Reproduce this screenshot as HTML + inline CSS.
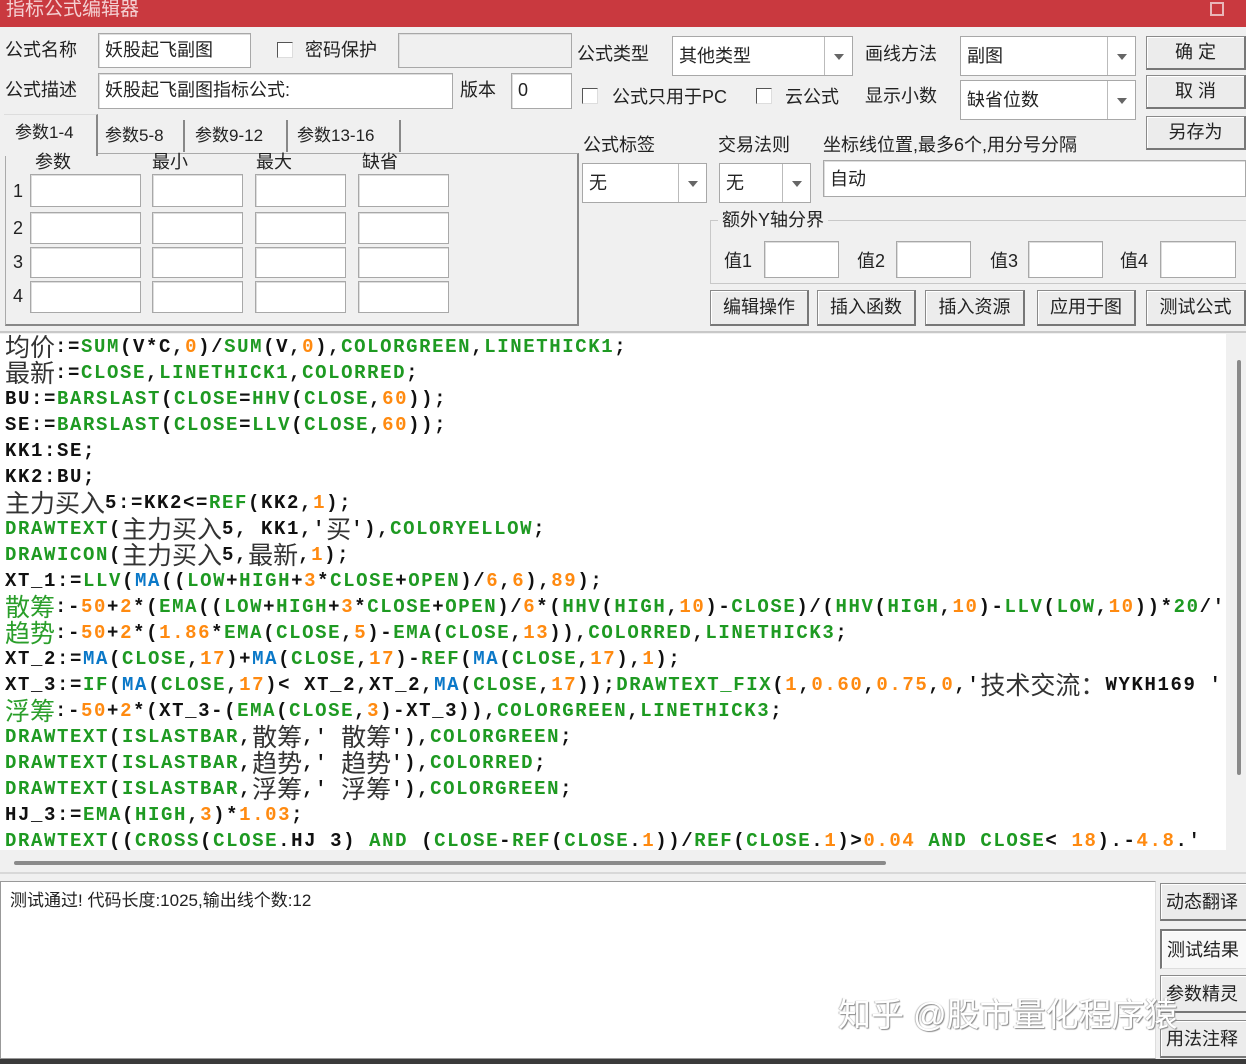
<!DOCTYPE html>
<html><head><meta charset="utf-8">
<style>
*{box-sizing:border-box;margin:0;padding:0}
body{width:1246px;height:1064px;overflow:hidden;background:#f0f0f0;position:relative;font-family:"Liberation Sans","Noto Sans CJK SC",sans-serif;font-size:18px;color:#222}
.a{position:absolute}
.title{left:0;top:0;width:1246px;height:27px;background:#c9393f;color:#f4d0d2;font-size:19px;line-height:20px;padding-left:6px;overflow:hidden}
.in{position:absolute;background:#fff;border:1px solid #a8a8a8;box-shadow:inset 1px 1px 0 #ddd;font-size:18px;line-height:32px;padding-left:6px;white-space:nowrap}
.lb{position:absolute;font-size:18px;white-space:nowrap;line-height:22px}
.cb{position:absolute;width:16px;height:16px;background:#fff;border:1px solid #555;border-right-color:#ddd;border-bottom-color:#ddd}
.sel{position:absolute;background:#fff;border:1px solid #a8a8a8;font-size:18px;padding-left:6px;white-space:nowrap}
.sel .ar{position:absolute;right:0;top:0;bottom:0;width:28px;border-left:1px solid #bbb;background:#fff}
.sel .ar:after{content:"";position:absolute;left:9px;top:50%;margin-top:-2px;border-left:5px solid transparent;border-right:5px solid transparent;border-top:6px solid #666}
.btn{position:absolute;background:#ececec;border:1px solid #8a8a8a;border-right:2px solid #777;border-bottom:2px solid #777;box-shadow:inset 1px 1px 0 #fff;font-size:18px;text-align:center;white-space:nowrap}
.code{left:0;top:334px;width:1226px;height:516px;background:#fff;overflow:hidden;padding-left:5px;padding-top:0px}
.ln{height:26px;line-height:26px;white-space:pre;overflow:hidden;font-family:"Liberation Mono","Noto Sans CJK SC",monospace;font-weight:bold;font-size:19px;letter-spacing:1.6px;color:#111}
.ln .c{display:inline-block;height:26px;line-height:24px;vertical-align:top;font-family:"Noto Sans CJK SC",sans-serif;font-weight:normal;font-size:25px;letter-spacing:0;color:#333}
.g{color:#1e9a22}.o{color:#ff8a10}.b{color:#0a78c8}
.ln .c.g{color:#2a9e2a}
</style></head><body>
<div class="a title">指标公式编辑器</div>
<div class="a" style="right:22px;top:2px;width:14px;height:14px;border:2px solid #e9b6b9"></div>

<div class="lb" style="left:5px;top:39px">公式名称</div>
<div class="in" style="left:98px;top:33px;width:153px;height:35px">妖股起飞副图</div>
<div class="cb" style="left:277px;top:42px"></div>
<div class="lb" style="left:305px;top:39px">密码保护</div>
<div class="in" style="left:398px;top:33px;width:174px;height:35px;background:#f0f0f0"></div>
<div class="lb" style="left:5px;top:79px">公式描述</div>
<div class="in" style="left:98px;top:73px;width:355px;height:36px">妖股起飞副图指标公式:</div>
<div class="lb" style="left:460px;top:79px">版本</div>
<div class="in" style="left:511px;top:73px;width:61px;height:36px">0</div>

<div class="a" style="left:5px;top:153px;width:574px;height:173px;border:1px solid #aaa;border-right:2px solid #888;border-bottom:2px solid #888"></div>
<div class="a" style="left:4px;top:114px;width:94px;height:42px;background:#f0f0f0;border-right:2px solid #888;border-top:1px solid #ddd"></div>
<div class="lb" style="left:15px;top:122px;font-size:17px">参数1-4</div>
<div class="lb" style="left:105px;top:125px;font-size:17px">参数5-8</div>
<div class="a" style="left:183px;top:120px;width:2px;height:32px;background:#888"></div>
<div class="lb" style="left:195px;top:125px;font-size:17px">参数9-12</div>
<div class="a" style="left:286px;top:120px;width:2px;height:32px;background:#888"></div>
<div class="lb" style="left:297px;top:125px;font-size:17px">参数13-16</div>
<div class="a" style="left:399px;top:120px;width:2px;height:32px;background:#888"></div>
<div class="lb" style="left:35px;top:151px">参数</div>
<div class="lb" style="left:152px;top:151px">最小</div>
<div class="lb" style="left:256px;top:151px">最大</div>
<div class="lb" style="left:362px;top:151px">缺省</div>

<div class="lb" style="left:13px;top:180px">1</div>
<div class="lb" style="left:13px;top:217px">2</div>
<div class="lb" style="left:13px;top:251px">3</div>
<div class="lb" style="left:13px;top:285px">4</div>

<div class="in" style="left:30px;top:174px;width:111px;height:33px"></div>
<div class="in" style="left:152px;top:174px;width:91px;height:33px"></div>
<div class="in" style="left:255px;top:174px;width:91px;height:33px"></div>
<div class="in" style="left:358px;top:174px;width:91px;height:33px"></div>
<div class="in" style="left:30px;top:212px;width:111px;height:32px"></div>
<div class="in" style="left:152px;top:212px;width:91px;height:32px"></div>
<div class="in" style="left:255px;top:212px;width:91px;height:32px"></div>
<div class="in" style="left:358px;top:212px;width:91px;height:32px"></div>
<div class="in" style="left:30px;top:247px;width:111px;height:31px"></div>
<div class="in" style="left:152px;top:247px;width:91px;height:31px"></div>
<div class="in" style="left:255px;top:247px;width:91px;height:31px"></div>
<div class="in" style="left:358px;top:247px;width:91px;height:31px"></div>
<div class="in" style="left:30px;top:281px;width:111px;height:32px"></div>
<div class="in" style="left:152px;top:281px;width:91px;height:32px"></div>
<div class="in" style="left:255px;top:281px;width:91px;height:32px"></div>
<div class="in" style="left:358px;top:281px;width:91px;height:32px"></div>

<div class="lb" style="left:577px;top:43px">公式类型</div>
<div class="sel" style="left:672px;top:36px;width:181px;height:40px;line-height:38px">其他类型<span class="ar"></span></div>
<div class="lb" style="left:865px;top:43px">画线方法</div>
<div class="sel" style="left:960px;top:36px;width:176px;height:40px;line-height:38px">副图<span class="ar"></span></div>
<div class="cb" style="left:582px;top:88px"></div>
<div class="lb" style="left:612px;top:86px">公式只用于PC</div>
<div class="cb" style="left:756px;top:88px"></div>
<div class="lb" style="left:785px;top:86px">云公式</div>
<div class="lb" style="left:865px;top:85px">显示小数</div>
<div class="sel" style="left:960px;top:80px;width:176px;height:40px;line-height:38px">缺省位数<span class="ar"></span></div>

<div class="btn" style="left:1146px;top:36px;width:100px;height:34px;line-height:30px">确 定</div>
<div class="btn" style="left:1146px;top:75px;width:100px;height:34px;line-height:30px">取 消</div>
<div class="btn" style="left:1146px;top:116px;width:100px;height:34px;line-height:30px">另存为</div>

<div class="lb" style="left:583px;top:134px">公式标签</div>
<div class="lb" style="left:718px;top:134px">交易法则</div>
<div class="lb" style="left:823px;top:134px">坐标线位置,最多6个,用分号分隔</div>
<div class="sel" style="left:582px;top:163px;width:125px;height:40px;line-height:38px">无<span class="ar"></span></div>
<div class="sel" style="left:719px;top:163px;width:92px;height:40px;line-height:38px">无<span class="ar"></span></div>
<div class="in" style="left:823px;top:160px;width:423px;height:37px;line-height:36px">自动</div>

<div class="a" style="left:710px;top:220px;width:536px;height:64px;border:1px solid #c8c8c8;border-right:none"></div>
<div class="lb" style="left:718px;top:209px;background:#f0f0f0;padding:0 4px">额外Y轴分界</div>
<div class="lb" style="left:724px;top:250px">值1</div>
<div class="in" style="left:764px;top:241px;width:75px;height:37px"></div>
<div class="lb" style="left:857px;top:250px">值2</div>
<div class="in" style="left:896px;top:241px;width:75px;height:37px"></div>
<div class="lb" style="left:990px;top:250px">值3</div>
<div class="in" style="left:1028px;top:241px;width:75px;height:37px"></div>
<div class="lb" style="left:1120px;top:250px">值4</div>
<div class="in" style="left:1160px;top:241px;width:76px;height:37px"></div>

<div class="btn" style="left:710px;top:290px;width:99px;height:36px;line-height:33px">编辑操作</div>
<div class="btn" style="left:817px;top:290px;width:99px;height:36px;line-height:33px">插入函数</div>
<div class="btn" style="left:925px;top:290px;width:100px;height:36px;line-height:33px">插入资源</div>
<div class="btn" style="left:1037px;top:290px;width:99px;height:36px;line-height:33px">应用于图</div>
<div class="btn" style="left:1146px;top:290px;width:100px;height:36px;line-height:33px">测试公式</div>

<div class="a" style="left:0;top:331px;width:1246px;height:2px;background:#c8c8c8"></div>

<div class="a code">
<div class="ln"><span class="c">均价</span>:=<span class="g">SUM</span>(V*C,<span class="o">0</span>)/<span class="g">SUM</span>(V,<span class="o">0</span>),<span class="g">COLORGREEN</span>,<span class="g">LINETHICK1</span>;</div>
<div class="ln"><span class="c">最新</span>:=<span class="g">CLOSE</span>,<span class="g">LINETHICK1</span>,<span class="g">COLORRED</span>;</div>
<div class="ln">BU:=<span class="g">BARSLAST</span>(<span class="g">CLOSE</span>=<span class="g">HHV</span>(<span class="g">CLOSE</span>,<span class="o">60</span>));</div>
<div class="ln">SE:=<span class="g">BARSLAST</span>(<span class="g">CLOSE</span>=<span class="g">LLV</span>(<span class="g">CLOSE</span>,<span class="o">60</span>));</div>
<div class="ln">KK1:SE;</div>
<div class="ln">KK2:BU;</div>
<div class="ln"><span class="c">主力买入</span>5:=KK2&lt;=<span class="g">REF</span>(KK2,<span class="o">1</span>);</div>
<div class="ln"><span class="g">DRAWTEXT</span>(<span class="c">主力买入</span>5, KK1,'<span class="c">买</span>'),<span class="g">COLORYELLOW</span>;</div>
<div class="ln"><span class="g">DRAWICON</span>(<span class="c">主力买入</span>5,<span class="c">最新</span>,<span class="o">1</span>);</div>
<div class="ln">XT_1:=<span class="g">LLV</span>(<span class="b">MA</span>((<span class="g">LOW</span>+<span class="g">HIGH</span>+<span class="o">3</span>*<span class="g">CLOSE</span>+<span class="g">OPEN</span>)/<span class="o">6</span>,<span class="o">6</span>),<span class="o">89</span>);</div>
<div class="ln"><span class="c g">散筹</span>:-<span class="o">50</span>+<span class="o">2</span>*(<span class="g">EMA</span>((<span class="g">LOW</span>+<span class="g">HIGH</span>+<span class="o">3</span>*<span class="g">CLOSE</span>+<span class="g">OPEN</span>)/<span class="o">6</span>*(<span class="g">HHV</span>(<span class="g">HIGH</span>,<span class="o">10</span>)-<span class="g">CLOSE</span>)/(<span class="g">HHV</span>(<span class="g">HIGH</span>,<span class="o">10</span>)-<span class="g">LLV</span>(<span class="g">LOW</span>,<span class="o">10</span>))*<span class="g">20</span>/'</div>
<div class="ln"><span class="c g">趋势</span>:-<span class="o">50</span>+<span class="o">2</span>*(<span class="o">1.86</span>*<span class="g">EMA</span>(<span class="g">CLOSE</span>,<span class="o">5</span>)-<span class="g">EMA</span>(<span class="g">CLOSE</span>,<span class="o">13</span>)),<span class="g">COLORRED</span>,<span class="g">LINETHICK3</span>;</div>
<div class="ln">XT_2:=<span class="b">MA</span>(<span class="g">CLOSE</span>,<span class="o">17</span>)+<span class="b">MA</span>(<span class="g">CLOSE</span>,<span class="o">17</span>)-<span class="g">REF</span>(<span class="b">MA</span>(<span class="g">CLOSE</span>,<span class="o">17</span>),<span class="o">1</span>);</div>
<div class="ln">XT_3:=<span class="g">IF</span>(<span class="b">MA</span>(<span class="g">CLOSE</span>,<span class="o">17</span>)&lt; XT_2,XT_2,<span class="b">MA</span>(<span class="g">CLOSE</span>,<span class="o">17</span>));<span class="g">DRAWTEXT_FIX</span>(<span class="o">1</span>,<span class="o">0.60</span>,<span class="o">0.75</span>,<span class="o">0</span>,'<span class="c">技术交流：</span>WYKH169 '</div>
<div class="ln"><span class="c g">浮筹</span>:-<span class="o">50</span>+<span class="o">2</span>*(XT_3-(<span class="g">EMA</span>(<span class="g">CLOSE</span>,<span class="o">3</span>)-XT_3)),<span class="g">COLORGREEN</span>,<span class="g">LINETHICK3</span>;</div>
<div class="ln"><span class="g">DRAWTEXT</span>(<span class="g">ISLASTBAR</span>,<span class="c">散筹</span>,' <span class="c">散筹</span>'),<span class="g">COLORGREEN</span>;</div>
<div class="ln"><span class="g">DRAWTEXT</span>(<span class="g">ISLASTBAR</span>,<span class="c">趋势</span>,' <span class="c">趋势</span>'),<span class="g">COLORRED</span>;</div>
<div class="ln"><span class="g">DRAWTEXT</span>(<span class="g">ISLASTBAR</span>,<span class="c">浮筹</span>,' <span class="c">浮筹</span>'),<span class="g">COLORGREEN</span>;</div>
<div class="ln">HJ_3:=<span class="g">EMA</span>(<span class="g">HIGH</span>,<span class="o">3</span>)*<span class="o">1.03</span>;</div>
<div class="ln"><span class="g">DRAWTEXT</span>((<span class="g">CROSS</span>(<span class="g">CLOSE</span>.HJ 3) <span class="g">AND</span> (<span class="g">CLOSE</span>-<span class="g">REF</span>(<span class="g">CLOSE</span>.<span class="o">1</span>))/<span class="g">REF</span>(<span class="g">CLOSE</span>.<span class="o">1</span>)&gt;<span class="o">0.04</span> <span class="g">AND</span> <span class="g">CLOSE</span>&lt; <span class="o">18</span>).-<span class="o">4.8</span>.'</div>
</div>
<div class="a" style="left:1226px;top:334px;width:20px;height:516px;background:#f0f0f0"></div>
<div class="a" style="left:1237px;top:360px;width:4px;height:415px;background:#8a8a8a;border-radius:2px"></div>
<div class="a" style="left:0;top:850px;width:1226px;height:22px;background:#f0f0f0"></div>
<div class="a" style="left:14px;top:861px;width:872px;height:4px;background:#8a8a8a;border-radius:2px"></div>
<div class="a" style="left:0;top:872px;width:1246px;height:2px;background:#d8d8d8"></div>

<div class="a" style="left:0;top:881px;width:1156px;height:178px;background:#fff;border:1px solid #999;border-right-color:#ddd"></div>
<div class="lb" style="left:10px;top:890px;font-size:17px">测试通过! 代码长度:1025,输出线个数:12</div>
<div class="btn" style="left:1160px;top:883px;width:90px;height:38px;line-height:36px;text-align:left;padding-left:5px">动态翻译</div>
<div class="btn" style="left:1160px;top:929px;width:90px;height:40px;line-height:38px;text-align:left;padding-left:5px;background:#f8f8f8;border:2px solid #777;border-right:1px solid #ddd;border-bottom:1px solid #ddd">测试结果</div>
<div class="btn" style="left:1160px;top:975px;width:90px;height:38px;line-height:36px;text-align:left;padding-left:5px">参数精灵</div>
<div class="btn" style="left:1160px;top:1020px;width:90px;height:38px;line-height:36px;text-align:left;padding-left:5px">用法注释</div>
<div class="lb" style="left:838px;top:995px;font-size:33px;line-height:40px;color:#fff;text-shadow:1px 1px 1px #888,-1px 0 1px #bbb">知乎 @股市量化程序猿</div>
<div class="a" style="left:0;top:1059px;width:1246px;height:5px;background:#3a3a3a"></div>
</body></html>
